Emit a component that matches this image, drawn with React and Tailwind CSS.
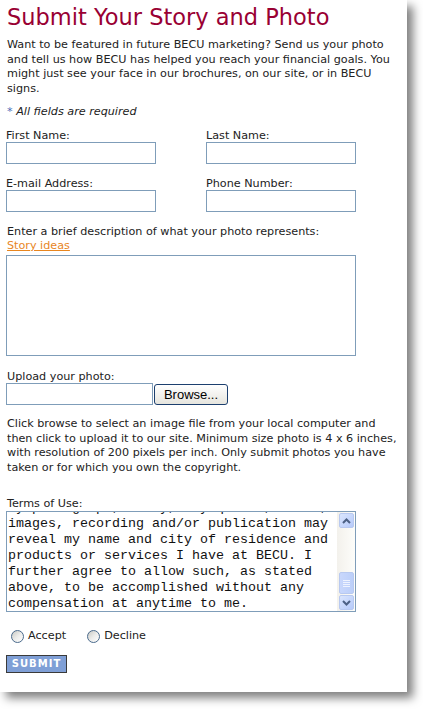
import React from 'react'

const sans = { fontFamily: '"DejaVu Sans", Verdana, sans-serif' }

function Field({ label, className = '' }) {
  return (
    <div className={`flex flex-col ${className}`}>
      <span className="text-[11.2px] leading-[13px]">{label}</span>
      <div className="w-[150px] h-[22px] border border-[#7f9db9] bg-white" />
    </div>
  )
}

function Radio({ label }) {
  return (
    <label className="flex items-center gap-[4px]">
      <span className="w-[13px] h-[13px] rounded-full border border-[#4a6a8c] bg-gradient-to-br from-[#c9c9c4] via-[#ececea] to-white" />
      <span className="text-[11.2px] leading-[14px]">{label}</span>
    </label>
  )
}

function Arrow({ up }) {
  return (
    <svg width="9" height="6" viewBox="0 0 9 6">
      <path
        d={up ? 'M1 5 L4.5 1.5 L8 5' : 'M1 1 L4.5 4.5 L8 1'}
        fill="none"
        stroke="#4d6185"
        strokeWidth="2"
      />
    </svg>
  )
}

function ScrollButton({ up }) {
  return (
    <div className="w-[15px] h-[15px] rounded-[2px] border border-[#b8c9f0] bg-gradient-to-br from-[#dbe6fd] to-[#b6cafa] flex items-center justify-center">
      <Arrow up={up} />
    </div>
  )
}

export default function App() {
  return (
    <div className="min-h-[709px] bg-white text-[#222]" style={sans}>
      <div className="w-[407px] bg-white pl-[6px] pb-[18px] shadow-[6px_6px_9px_rgba(0,0,0,0.5)]">
        <h1 className="text-[22.5px] leading-[34px] text-[#990033] pl-[1px]">Submit Your Story and Photo</h1>

        <p className="text-[11.2px] leading-[14.5px] mt-[4px] pl-[1px] whitespace-nowrap">
          Want to be featured in future BECU marketing? Send us your photo
          <br />
          and tell us how BECU has helped you reach your financial goals. You
          <br />
          might just see your face in our brochures, on our site, or in BECU
          <br />
          signs.
        </p>

        <p className="text-[11.2px] leading-[14px] mt-[9px] italic pl-[1px]">
          <span className="text-[#4b6cb7]">*</span> All fields are required
        </p>

        <div className="flex gap-[50px] mt-[10px]">
          <Field label="First Name:" />
          <Field label="Last Name:" />
        </div>

        <div className="flex gap-[50px] mt-[13px]">
          <Field label="E-mail Address:" />
          <Field label="Phone Number:" />
        </div>

        <p className="text-[11.2px] leading-[14px] mt-[13px] pl-[1px]">
          Enter a brief description of what your photo represents:
        </p>
        <a href="#" className="block text-[11.2px] leading-[14px] text-[#e8861f] underline pl-[1px] w-fit">
          Story ideas
        </a>
        <div className="w-[350px] h-[101px] mt-[2px] border border-[#7f9db9] bg-white" />

        <p className="text-[11.2px] leading-[13px] mt-[14px] pl-[1px]">Upload your photo:</p>
        <div className="flex items-center">
          <div className="w-[147px] h-[22px] border border-[#7f9db9] bg-white" />
          <button
            className="ml-[1px] w-[74px] h-[21px] rounded-[3px] border border-[#1c3f6e] bg-gradient-to-b from-white to-[#e6e5de] text-[13px] leading-[19px] text-black"
            style={{ fontFamily: '"Liberation Sans", Arial, sans-serif' }}
          >
            Browse...
          </button>
        </div>

        <p className="text-[11.2px] leading-[14.5px] mt-[12px] pl-[1px] whitespace-nowrap">
          Click browse to select an image file from your local computer and
          <br />
          then click to upload it to our site. Minimum size photo is 4 x 6 inches,
          <br />
          with resolution of 200 pixels per inch. Only submit photos you have
          <br />
          taken or for which you own the copyright.
        </p>

        <p className="text-[11.2px] leading-[13px] mt-[22px] pl-[1px]">Terms of Use:</p>
        <div className="w-[350px] h-[101px] mt-[1px] border border-[#7f9db9] bg-white flex">
          <div className="flex-1 overflow-hidden pl-[1px]">
            <div
              className="text-[13.33px] leading-[16px] text-[#111] whitespace-pre -mt-[12px]"
              style={{ fontFamily: '"Liberation Mono", "Courier New", monospace' }}
            >
              {'my photograph, story, any quotes, video,\n'}
              {'images, recording and/or publication may\n'}
              {'reveal my name and city of residence and\n'}
              {'products or services I have at BECU. I\n'}
              {'further agree to allow such, as stated\n'}
              {'above, to be accomplished without any\n'}
              {'compensation at anytime to me.'}
            </div>
          </div>
          <div className="w-[18px] flex flex-col items-center py-[1px] bg-gradient-to-r from-[#f3f1ec] to-[#fdfdfa]">
            <ScrollButton up />
            <div className="flex-1 w-full flex flex-col justify-end items-center pb-[1px]">
              <div className="w-[15px] h-[22px] rounded-[2px] border border-[#b8c9f0] bg-gradient-to-r from-[#c8d7fc] to-[#bccff9] flex flex-col items-center justify-center gap-[1px]">
                <span className="w-[7px] h-px bg-[#eef3ff]" />
                <span className="w-[7px] h-px bg-[#eef3ff]" />
                <span className="w-[7px] h-px bg-[#eef3ff]" />
                <span className="w-[7px] h-px bg-[#eef3ff]" />
              </div>
            </div>
            <ScrollButton />
          </div>
        </div>

        <div className="flex items-center gap-[21px] mt-[17px] pl-[5px]">
          <Radio label="Accept" />
          <Radio label="Decline" />
        </div>

        <button className="mt-[12px] w-[61px] h-[18px] bg-[#7f9fd6] border border-[#3a3a3a] text-white text-[10px] font-bold tracking-[1px] leading-[16px]">
          SUBMIT
        </button>
      </div>
    </div>
  )
}
